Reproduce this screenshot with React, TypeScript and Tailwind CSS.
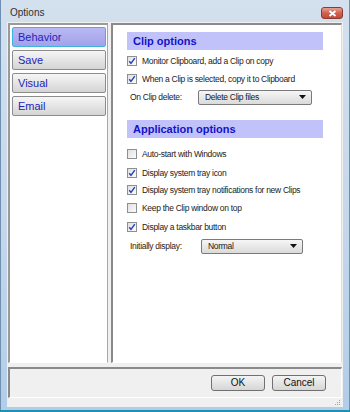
import React from "react";

const font = { fontFamily: '"Liberation Sans", Arial, sans-serif' };

function Check({ checked }: { checked: boolean }) {
  return (
    <div className="w-[10px] h-[10px] border border-[#8e8f8f] bg-gradient-to-br from-[#e0e0e0] to-[#fbfbfb] flex items-center justify-center shrink-0">
      {checked && (
        <svg width="8" height="8" viewBox="0 0 8 8">
          <path d="M1.2 4.2 L3 6.3 L6.8 1.2" fill="none" stroke="#2a3eb4" strokeWidth="1.4" />
        </svg>
      )}
    </div>
  );
}

function CheckRow({ checked, label, mt }: { checked: boolean; label: string; mt: string }) {
  return (
    <div className={`flex items-center h-[16px] gap-[5px] ${mt}`}>
      <Check checked={checked} />
      <span className="text-[8.5px] tracking-[-0.3px] text-[#1b1b1b] whitespace-nowrap">{label}</span>
    </div>
  );
}

function Select({ value, w }: { value: string; w: string }) {
  return (
    <div className={`${w} h-[15px] border border-[#7a7a7a] rounded-[2px] bg-gradient-to-b from-[#f6f6f6] to-[#dadada] flex items-center justify-between pl-[6px] pr-[5px]`}>
      <span className="text-[8.5px] tracking-[-0.3px] text-[#1b1b1b]">{value}</span>
      <svg width="7" height="4" viewBox="0 0 7 4">
        <path d="M0 0 H7 L3.5 4 Z" fill="#111" />
      </svg>
    </div>
  );
}

function Tab({ label, active }: { label: string; active?: boolean }) {
  return (
    <div
      className={
        active
          ? "h-[20px] rounded-[2px] border border-[#3fb3dc] bg-gradient-to-b from-[#b8b8f3] to-[#a2a2ea] flex items-center pl-[5px]"
          : "h-[20px] rounded-[2px] border border-[#8c8c8c] bg-gradient-to-b from-[#f6f6f6] to-[#d4d4d4] flex items-center pl-[5px]"
      }
    >
      <span className="text-[11px] text-[#2424b8]">{label}</span>
    </div>
  );
}

function Header({ label }: { label: string }) {
  return (
    <div className="w-[196px] h-[18px] bg-[#c2c2fb] flex items-center pl-[6px]">
      <span className="text-[11px] font-bold text-[#1212c8]">{label}</span>
    </div>
  );
}

export default function App() {
  return (
    <div style={font} className="w-[350px] h-[412px] bg-[#1e8fb8]">
      <div className="w-full h-[410px] bg-gradient-to-b from-[#d3e0ee] via-[#c7d8eb] to-[#b2cde8] border-l border-r border-[#6f8fb0] flex flex-col">
        {/* title bar */}
        <div className="h-[22px] flex items-start justify-between pl-[9px] pr-[6px] pt-[7px] shrink-0">
          <span className="text-[10px] text-[#303030] leading-[12px]">Options</span>
          <div className="w-[22px] h-[12px] rounded-[3px] border border-[#8a3a32] bg-gradient-to-b from-[#e8a093] via-[#d0614f] to-[#c24a37] flex items-center justify-center">
            <svg width="9" height="7" viewBox="0 0 9 7">
              <path d="M1.5 1 L7.5 6 M7.5 1 L1.5 6" stroke="#fff" strokeWidth="1.8" />
            </svg>
          </div>
        </div>
        {/* client */}
        <div className="mx-[6px] h-[385px] bg-[#f0f0f0] flex flex-col pt-[1px] px-[1px]">
          <div className="flex gap-[3px] h-[340px]">
            {/* left panel */}
            <div className="w-[100px] bg-white border-l-2 border-t-2 border-[#9a9a9a] border-r border-b border-r-[#a8a8a8] border-b-white flex flex-col gap-[3px] pt-[2px] pl-[2px] pr-[1px]">
              <Tab label="Behavior" active />
              <Tab label="Save" />
              <Tab label="Visual" />
              <Tab label="Email" />
            </div>
            {/* right panel */}
            <div className="flex-1 bg-white border-l-2 border-t-2 border-[#8a8a8a] border-r border-b border-r-[#dcdcdc] border-b-white pl-[14px] pt-[7px]">
              <Header label="Clip options" />
              <CheckRow checked label="Monitor Clipboard, add a Clip on copy" mt="mt-[3px]" />
              <CheckRow checked label="When a Clip is selected, copy it to Clipboard" mt="mt-[2px]" />
              <div className="flex items-center h-[16px] mt-[2px] pl-[3px]">
                <span className="text-[8.5px] tracking-[-0.3px] text-[#1b1b1b] w-[68px]">On Clip delete:</span>
                <Select value="Delete Clip files" w="w-[114px]" />
              </div>
              <div className="mt-[15px]">
                <Header label="Application options" />
              </div>
              <CheckRow checked={false} label="Auto-start with Windows" mt="mt-[8px]" />
              <CheckRow checked label="Display system tray icon" mt="mt-[3px]" />
              <CheckRow checked label="Display system tray notifications for new Clips" mt="mt-[1px]" />
              <CheckRow checked={false} label="Keep the Clip window on top" mt="mt-[2px]" />
              <CheckRow checked label="Display a taskbar button" mt="mt-[3px]" />
              <div className="flex items-center h-[16px] mt-[3px] pl-[3px]">
                <span className="text-[8.5px] tracking-[-0.3px] text-[#1b1b1b] w-[71px]">Initially display:</span>
                <Select value="Normal" w="w-[102px]" />
              </div>
            </div>
          </div>
          {/* bottom bar */}
          <div className="mt-[4px] h-[31px] border-l-2 border-t-2 border-[#8a8a8a] border-r border-b border-r-white border-b-white flex items-center justify-end gap-[7px] pr-[15px]">
            <button className="w-[54px] h-[16px] rounded-[3px] border border-[#707070] bg-gradient-to-b from-[#f4f4f4] to-[#d6d6d6] text-[10px] text-[#111] leading-none">
              OK
            </button>
            <button className="w-[54px] h-[16px] rounded-[3px] border border-[#707070] bg-gradient-to-b from-[#f4f4f4] to-[#d6d6d6] text-[10px] text-[#111] leading-none">
              Cancel
            </button>
          </div>
          <div className="flex-1 flex justify-end items-end pr-[1px] pb-[1px]">
            <svg width="6" height="6" viewBox="0 0 6 6">
              <rect x="4" y="0" width="1" height="1" fill="#a0a0a0" />
              <rect x="2" y="2" width="1" height="1" fill="#a0a0a0" />
              <rect x="4" y="2" width="1" height="1" fill="#a0a0a0" />
              <rect x="0" y="4" width="1" height="1" fill="#a0a0a0" />
              <rect x="2" y="4" width="1" height="1" fill="#a0a0a0" />
              <rect x="4" y="4" width="1" height="1" fill="#a0a0a0" />
            </svg>
          </div>
        </div>
        <div className="flex-1" />
      </div>
    </div>
  );
}
